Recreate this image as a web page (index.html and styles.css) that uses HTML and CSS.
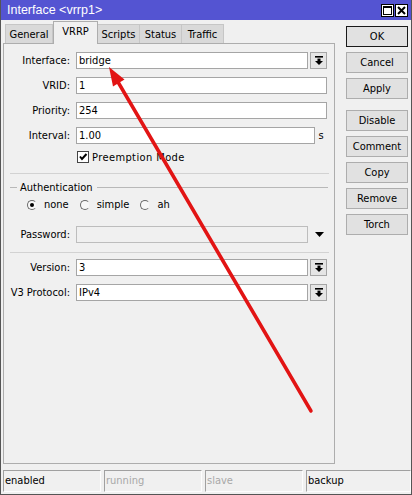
FILE: index.html
```html
<!DOCTYPE html>
<html lang="en">
<head>
    <meta charset="UTF-8">
    <title>Interface &lt;vrrp1&gt;</title>
    <link rel="stylesheet" href="styles.css">
</head>
<body>
<div class="window">
    <div class="titlebar">
        <span class="title">Interface &lt;vrrp1&gt;</span>
        <div class="title-btns">
            <span class="tbtn">
                <svg width="9" height="9" viewBox="0 0 9 9"><rect x="0.5" y="0.5" width="8" height="8" fill="none" stroke="#000"/><rect x="0" y="0" width="9" height="2" fill="#000"/></svg>
            </span>
            <span class="tbtn">
                <svg width="9" height="9" viewBox="0 0 9 9"><path d="M1 1 L8 8 M8 1 L1 8" stroke="#000" stroke-width="2"/></svg>
            </span>
        </div>
    </div>
    <div class="main">
        <div class="content">
            <div class="tabs">
                <div class="tab tab-general">General</div>
                <div class="tab tab-vrrp active">VRRP</div>
                <div class="tab tab-small">Scripts</div>
                <div class="tab tab-small">Status</div>
                <div class="tab tab-small">Traffic</div>
            </div>
            <div class="panel">
                <div class="row">
                    <span class="lbl">Interface:</span>
                    <div class="field">bridge</div>
                    <div class="drop">
                        <svg width="8" height="9" viewBox="0 0 8 9"><rect x="0" y="0" width="8" height="1.6" fill="#000"/><rect x="2.5" y="2.6" width="3" height="2.4" fill="#000"/><path d="M0 5 L8 5 L4 9 Z" fill="#000"/></svg>
                    </div>
                </div>
                <div class="row">
                    <span class="lbl">VRID:</span>
                    <div class="field">1</div>
                </div>
                <div class="row">
                    <span class="lbl">Priority:</span>
                    <div class="field">254</div>
                </div>
                <div class="row">
                    <span class="lbl">Interval:</span>
                    <div class="field">1.00</div>
                    <span class="unit">s</span>
                </div>
                <div class="check-row">
                    <span class="checkbox">
                        <svg width="10" height="10" viewBox="0 0 10 10"><path d="M2 4.5 L4 7 L8.5 2" fill="none" stroke="#000" stroke-width="2"/></svg>
                    </span>
                    <span class="check-text">Preemption Mode</span>
                </div>
                <div class="sep"></div>
                <div class="group-title">
                    <span class="dash"></span>
                    <span class="group-text">Authentication</span>
                    <span class="line"></span>
                </div>
                <div class="radios">
                    <span class="radio"><span class="dot checked"></span>none</span>
                    <span class="radio"><span class="dot"></span>simple</span>
                    <span class="radio"><span class="dot"></span>ah</span>
                </div>
                <div class="row row-pw">
                    <span class="lbl">Password:</span>
                    <div class="field disabled"></div>
                    <div class="pw-drop">
                        <svg width="9" height="5" viewBox="0 0 9 5"><path d="M0 0 L9 0 L4.5 5 Z" fill="#000"/></svg>
                    </div>
                </div>
                <div class="sep"></div>
                <div class="row row-version">
                    <span class="lbl">Version:</span>
                    <div class="field">3</div>
                    <div class="drop">
                        <svg width="8" height="9" viewBox="0 0 8 9"><rect x="0" y="0" width="8" height="1.6" fill="#000"/><rect x="2.5" y="2.6" width="3" height="2.4" fill="#000"/><path d="M0 5 L8 5 L4 9 Z" fill="#000"/></svg>
                    </div>
                </div>
                <div class="row">
                    <span class="lbl">V3 Protocol:</span>
                    <div class="field">IPv4</div>
                    <div class="drop">
                        <svg width="8" height="9" viewBox="0 0 8 9"><rect x="0" y="0" width="8" height="1.6" fill="#000"/><rect x="2.5" y="2.6" width="3" height="2.4" fill="#000"/><path d="M0 5 L8 5 L4 9 Z" fill="#000"/></svg>
                    </div>
                </div>
            </div>
        </div>
        <div class="side">
            <button class="btn default">OK</button>
            <button class="btn">Cancel</button>
            <button class="btn btn-apply">Apply</button>
            <button class="btn">Disable</button>
            <button class="btn">Comment</button>
            <button class="btn">Copy</button>
            <button class="btn">Remove</button>
            <button class="btn">Torch</button>
        </div>
    </div>
    <div class="statusbar">
        <div class="cell">enabled</div>
        <div class="cell dim">running</div>
        <div class="cell dim">slave</div>
        <div class="cell last">backup</div>
    </div>
</div>

<!-- red annotation arrow pointing at the interface field -->
<svg class="annotation" width="412" height="495" viewBox="0 0 412 495">
    <line x1="311" y1="411" x2="118" y2="82" stroke="#e21414" stroke-width="3.5" stroke-linecap="round"/>
    <polygon points="109,67 124.5,79.5 113,86.5" fill="#e21414"/>
</svg>
</body>
</html>
```

FILE: styles.css
```css
body {
    margin: 0;
    position: relative;
    font-family: "DejaVu Sans Condensed", "DejaVu Sans", sans-serif;
    font-size: 11px;
    color: #000;
    background: #f0f0f0;
}
.window {
    width: 412px;
    height: 495px;
    box-sizing: border-box;
    border: 1px solid #555;
    border-top: none;
    display: flex;
    flex-direction: column;
}
.titlebar {
    height: 20px;
    background: #5454d2;
    color: #fff;
    display: flex;
    align-items: center;
    justify-content: space-between;
    padding: 0 3px 0 6px;
}
.title {
    font-family: "Liberation Sans", Arial, sans-serif;
    font-size: 12.5px;
}
.title-btns {
    display: flex;
    gap: 1px;
}
.tbtn {
    width: 13px;
    height: 13px;
    box-sizing: border-box;
    background: #fff;
    border: 1px solid #000;
    display: flex;
    align-items: center;
    justify-content: center;
}
.main {
    display: flex;
    height: 444px;
}
.content {
    margin-left: 2px;
    width: 332px;
    display: flex;
    flex-direction: column;
}
.tabs {
    display: flex;
    align-items: flex-end;
    height: 23px;
    padding-left: 2px;
}
.tab {
    height: 19px;
    box-sizing: border-box;
    background: #d9d9d9;
    border: 1px solid #c6c6c6;
    border-bottom: none;
    display: flex;
    align-items: center;
    justify-content: center;
}
.tab-general {
    width: 48px;
}
.tab-vrrp {
    width: 45px;
}
.tab-small {
    width: 42px;
    border-left: none;
}
.tab.active {
    height: 23px;
    margin-bottom: -1px;
    padding-bottom: 3px;
    background: #f0f0f0;
    border-color: #adadad;
    position: relative;
    z-index: 1;
}
.panel {
    height: 421px;
    box-sizing: border-box;
    border: 1px solid #adadad;
    padding-right: 7px;
}
.row {
    display: flex;
    align-items: center;
    height: 17px;
    margin-top: 8px;
}
.lbl {
    width: 66px;
    margin-right: 6px;
    text-align: right;
    white-space: nowrap;
}
.field {
    flex: 1;
    height: 17px;
    box-sizing: border-box;
    background: #fff;
    border: 1px solid #a5a5a5;
    padding-left: 2px;
    line-height: 15px;
}
.field.disabled {
    background: #f0f0f0;
    border-color: #bdbdbd;
}
.drop {
    width: 17px;
    height: 17px;
    margin-left: 2px;
    box-sizing: border-box;
    background: #e5e5e5;
    border: 1px solid #a5a5a5;
    display: flex;
    align-items: center;
    justify-content: center;
}
.unit {
    width: 12px;
    text-align: center;
}
.pw-drop {
    width: 19px;
    padding-right: 3px;
    box-sizing: border-box;
    display: flex;
    justify-content: flex-end;
}
.check-row {
    display: flex;
    align-items: center;
    height: 14px;
    margin-top: 6px;
    padding-left: 73px;
}
.checkbox {
    width: 12px;
    height: 12px;
    box-sizing: border-box;
    background: #fff;
    border: 1px solid #444;
    margin-right: 3px;
    display: flex;
    align-items: center;
    justify-content: center;
}
.check-text {
    letter-spacing: 0.4px;
}
.sep {
    height: 1px;
    background: #d2d2d2;
    margin: 9px -2px 0 6px;
}
.group-title {
    display: flex;
    align-items: center;
    height: 13px;
    margin: 7px -1px 0 6px;
}
.dash {
    width: 7px;
    height: 1px;
    background: #b8b8b8;
}
.group-text {
    padding: 0 4px 0 3px;
}
.line {
    flex: 1;
    height: 1px;
    background: #b8b8b8;
}
.radios {
    display: flex;
    align-items: center;
    gap: 11px;
    height: 13px;
    margin-top: 4px;
    padding-left: 23px;
}
.radio {
    display: flex;
    align-items: center;
}
.dot {
    width: 10px;
    height: 10px;
    box-sizing: border-box;
    border-radius: 50%;
    border: 1px solid #6a6a6a;
    border-right-color: #f0f0f0;
    background: #f8f8f8;
    margin-right: 7px;
    position: relative;
}
.dot.checked::after {
    content: "";
    position: absolute;
    left: 2px;
    top: 2px;
    width: 4px;
    height: 4px;
    border-radius: 50%;
    background: #000;
}
.row-pw {
    margin-top: 15px;
}
.row-version {
    margin-top: 6px;
}
.side {
    width: 62px;
    margin-left: 11px;
    padding-top: 6px;
    display: flex;
    flex-direction: column;
}
.btn {
    height: 21px;
    margin-bottom: 5px;
    padding: 0;
    box-sizing: border-box;
    background: #e1e1e1;
    border: 1px solid #adadad;
    font-family: inherit;
    font-size: 11px;
    color: #000;
}
.btn.default {
    border-color: #1a1a1a;
}
.btn-apply {
    margin-bottom: 11px;
}
.statusbar {
    display: flex;
    gap: 3px;
    height: 22px;
    margin-top: 6px;
    padding-left: 2px;
}
.cell {
    width: 98px;
    box-sizing: border-box;
    border-top: 1px solid #a0a0a0;
    border-left: 1px solid #a0a0a0;
    border-right: 1px solid #fdfdfd;
    border-bottom: 1px solid #fdfdfd;
    padding-left: 1px;
    line-height: 20px;
}
.cell.dim {
    color: #a8a8a8;
}
.cell.last {
    flex: 1;
}
.annotation {
    position: absolute;
    top: 0;
    left: 0;
    pointer-events: none;
}
```
